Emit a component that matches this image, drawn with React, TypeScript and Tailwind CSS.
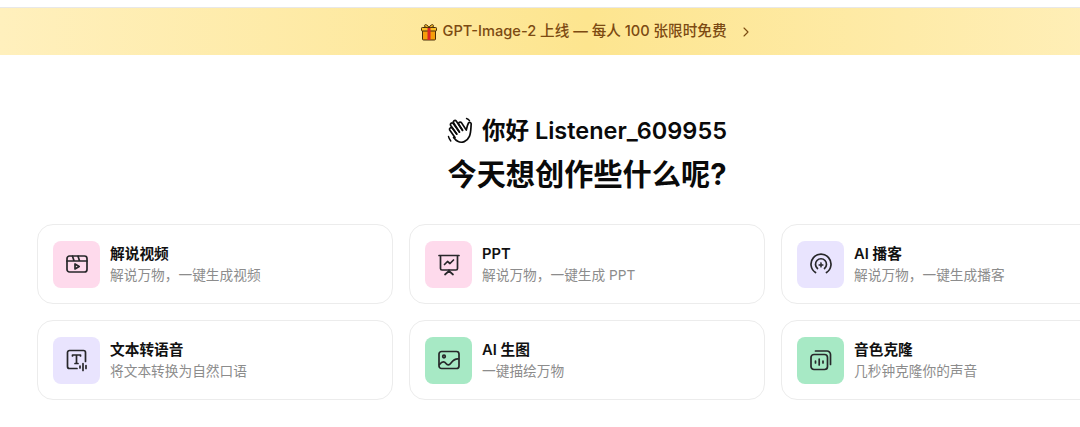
import React from 'react';
import { ChevronRight } from 'lucide-react';

const CJK = "font-['Inter','Noto_Sans_CJK_SC',sans-serif]";

const stroke = {
  fill: 'none',
  stroke: 'currentColor',
  strokeWidth: 1.7,
  strokeLinecap: 'round' as const,
  strokeLinejoin: 'round' as const,
};

const VideoIcon = () => (
  <svg width="24" height="24" viewBox="0 0 24 24" {...stroke}>
    <rect x="2" y="4" width="20" height="16" rx="2.500" />
    <path d="M2 9h20M7.500 4.200l1.500 4.600M13 4.200l1.500 4.600" />
    <path d="M10 12v5l4.200-2.500z" />
  </svg>
);

const SlideIcon = () => (
  <svg width="24" height="24" viewBox="0 0 24 24" {...stroke}>
    <path d="M2 3.500h20M3.500 3.500v13a1.500 1.500 0 0 0 1.500 1.500h14a1.500 1.500 0 0 0 1.500-1.500v-13" />
    <path d="M7.500 12.500l3-3 2.500 2 3.500-3.500M12 18v1M8 22.500l4-3.500 4 3.500" />
  </svg>
);

const PodcastIcon = () => (
  <svg width="24" height="24" viewBox="0 0 24 24" {...stroke}>
    <path d="M6.500 20.500a10 10 0 1 1 11 0" />
    <path d="M8.500 16.500a5.500 5.500 0 1 1 7 0" />
    <path d="M12 10.500l.7 1.800 1.800.7-1.800.7-.7 1.800-.7-1.800-1.800-.7 1.800-.7z" fill="currentColor" strokeWidth={0.6} />
  </svg>
);

const TextVoiceIcon = () => (
  <svg width="24" height="24" viewBox="0 0 24 24" {...stroke}>
    <path d="M12 20.500H4.500a2 2 0 0 1-2-2V4.500a2 2 0 0 1 2-2h14a2 2 0 0 1 2 2v9" />
    <path d="M7.500 8V7h8v1M11.500 7v8.500M10 15.500h3" />
    <path d="M15 18v2M18 15.500v7M21 17.500v3" />
  </svg>
);

const ImageIcon = () => (
  <svg width="24" height="24" viewBox="0 0 24 24" {...stroke}>
    <rect x="2" y="3.500" width="20" height="17" rx="2.500" />
    <circle cx="7" cy="8.500" r="1.300" />
    <path d="M2.500 16.500c3-3.500 5-3 6.500-1s3 2 5-.5 4-4.500 7.500-4" />
  </svg>
);

const CloneIcon = () => (
  <svg width="24" height="24" viewBox="0 0 24 24" {...stroke}>
    <rect x="2" y="6.500" width="16.500" height="15" rx="3" />
    <path d="M6.500 3h11.500a3.500 3.500 0 0 1 3.500 3.500v10" />
    <path d="M6.500 13v2M10.200 11v6M14 13v2" />
  </svg>
);

const WaveHand = () => (
  <svg width="26" height="28" viewBox="0 0 26 28" {...stroke} strokeWidth={1.7}>
    <path d="M8 20.500L2.700 13a1.600 1.600 0 0 1 2.700-1.700l4.300 5.700" />
    <path d="M9.700 17L3.700 8.500a1.600 1.600 0 0 1 2.700-1.800l6 8.300" />
    <path d="M12.400 15L6.500 5.800a1.600 1.600 0 0 1 2.700-1.700l6.300 9.200" />
    <path d="M15.500 13.300l-3.800-6.100a1.600 1.600 0 0 1 2.700-1.600l4.900 7.400c.5-2.400 1-5 2.200-7a1.500 1.500 0 0 1 2.700 1c-.4 4-.1 8.500-1.800 12.300-2.300 5.200-7.500 7.300-11.700 5-1.500-.8-2.800-2.200-4.100-3.900" />
    <path d="M1.500 19.500c.4 1.700 1.200 3.200 2.300 4.500M19.500 1.500c1.300.3 2.300 1 3 2.200" strokeWidth={1.400} />
  </svg>
);

const GiftIcon = () => (
  <svg width="18" height="18" viewBox="0 0 18 18">
    <rect x="2.500" y="6" width="13" height="11" rx="1" fill="#f59e0b" stroke="#4b2e0a" strokeWidth="1" />
    <rect x="1.500" y="4.500" width="15" height="3.500" rx=".8" fill="#fbbf24" stroke="#4b2e0a" strokeWidth="1" />
    <rect x="7.500" y="4.500" width="3" height="12.500" fill="#dc2626" />
    <path d="M9 4.500C7.500 1.500 4.500.8 4.500 2.800S7 4.500 9 4.500zM9 4.500c1.500-3 4.500-3.700 4.500-1.700S11 4.500 9 4.500z" fill="#fbbf24" stroke="#4b2e0a" strokeWidth="1" />
  </svg>
);

const cards = [
  { title: '解说视频', desc: '解说万物，一键生成视频', bg: 'bg-[#fedaec]', icon: <VideoIcon /> },
  { title: 'PPT', desc: '解说万物，一键生成 PPT', bg: 'bg-[#fedaec]', icon: <SlideIcon /> },
  { title: 'AI 播客', desc: '解说万物，一键生成播客', bg: 'bg-[#e9e4fe]', icon: <PodcastIcon /> },
  { title: '文本转语音', desc: '将文本转换为自然口语', bg: 'bg-[#e9e4fe]', icon: <TextVoiceIcon /> },
  { title: 'AI 生图', desc: '一键描绘万物', bg: 'bg-[#a7e9c5]', icon: <ImageIcon /> },
  { title: '音色克隆', desc: '几秒钟克隆你的声音', bg: 'bg-[#a7e9c5]', icon: <CloneIcon /> },
];

const App: React.FC = () => {
  return (
    <div className={`h-[427px] w-[1080px] overflow-hidden bg-white ${CJK}`}>
      <div className="w-[1174px]">
        <div className="h-[8px] border-b border-[#e8e8e8]" />
        <div className="flex h-[47px] items-center justify-center bg-gradient-to-r from-[#fff0bd] via-[#fde58f] to-[#fff0bd] text-[#7c4a12]">
          <GiftIcon />
          <span className="ml-[4px] text-[14.6px] font-medium">GPT-Image-2 上线 — 每人 100 张限时免费</span>
          <ChevronRight className="ml-[11px] h-[16px] w-[16px]" strokeWidth={1.6} />
        </div>

        <div className="mt-[59px] flex items-center justify-center text-[#0a0a0a]">
          <WaveHand />
          <span className="ml-[9px] text-[23.5px] leading-[34px] font-semibold">你好 Listener_609955</span>
        </div>
        <h1 className="mt-[6px] text-center text-[29.2px] leading-[42px] font-bold text-[#0a0a0a]">今天想创作些什么呢?</h1>

        <div className="mt-[28px] grid grid-cols-3 gap-4 px-[37px]">
          {cards.map((card) => (
            <div key={card.title} className="flex h-[80px] items-center gap-[10px] rounded-[16px] border border-[#ececec] bg-white pl-[15px]">
              <div className={`flex h-[47px] w-[47px] items-center justify-center rounded-[8px] text-[#27272a] ${card.bg}`}>
                {card.icon}
              </div>
              <div>
                <div className="text-[14.700px] leading-[20px] font-semibold text-[#111]">{card.title}</div>
                <div className="mt-[1px] text-[13.700px] leading-[20px] text-[#8c8c8c]">{card.desc}</div>
              </div>
            </div>
          ))}
        </div>
      </div>
    </div>
  );
};

export default App;
